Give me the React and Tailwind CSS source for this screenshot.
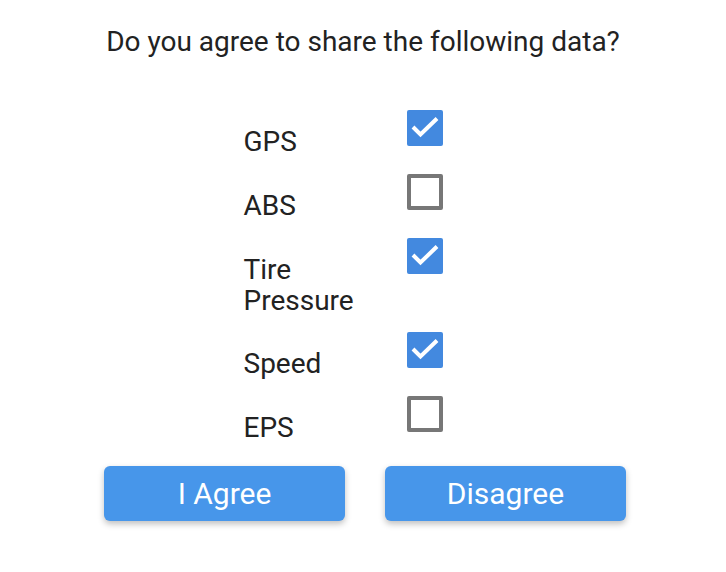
import { useState } from 'react';

const items = [
  { label: 'GPS', checked: true },
  { label: 'ABS', checked: false },
  { label: 'Tire Pressure', checked: true },
  { label: 'Speed', checked: true },
  { label: 'EPS', checked: false },
];

function Box({ checked, onClick }) {
  if (!checked) {
    return (
      <button
        onClick={onClick}
        className="w-9 h-9 shrink-0 rounded-[2px] border-4 border-[#777777] bg-white"
      />
    );
  }
  return (
    <button onClick={onClick} className="w-9 h-9 shrink-0 rounded-[2px] bg-[#4389df] flex items-center justify-center">
      <svg width="36" height="36" viewBox="0 0 36 36">
        <polyline points="6,17 13.5,24.5 30,8.5" fill="none" stroke="white" strokeWidth="4" />
      </svg>
    </button>
  );
}

export default function App() {
  const [state, setState] = useState(items);

  const toggle = (i) =>
    setState(state.map((it, j) => (j === i ? { ...it, checked: !it.checked } : it)));

  return (
    <div className="w-[726px] h-[572px] bg-white font-['Roboto',sans-serif] text-[#222222] flex flex-col items-center">
      <h1 className="mt-[26px] text-[28px] leading-[32px]">
        Do you agree to share the following data?
      </h1>

      <div className="mt-[52px] flex flex-col">
        {state.map((it, i) => (
          <div key={it.label} className="flex min-h-[64px] pb-[16px]">
            <div className="w-[163px] pr-[13px] pt-[17px] text-[28px] leading-[30.5px]">
              {it.label}
            </div>
            <div className="w-[76px]">
              <Box checked={it.checked} onClick={() => toggle(i)} />
            </div>
          </div>
        ))}
      </div>

      <div className="flex gap-10 mt-[6px] ml-1">
        <button className="w-[241px] h-[55px] rounded-[6px] bg-[#4796ea] text-white text-[30px] shadow-[0_3px_6px_rgba(0,0,0,0.25)]">
          I Agree
        </button>
        <button className="w-[241px] h-[55px] rounded-[6px] bg-[#4796ea] text-white text-[30px] shadow-[0_3px_6px_rgba(0,0,0,0.25)]">
          Disagree
        </button>
      </div>
    </div>
  );
}
